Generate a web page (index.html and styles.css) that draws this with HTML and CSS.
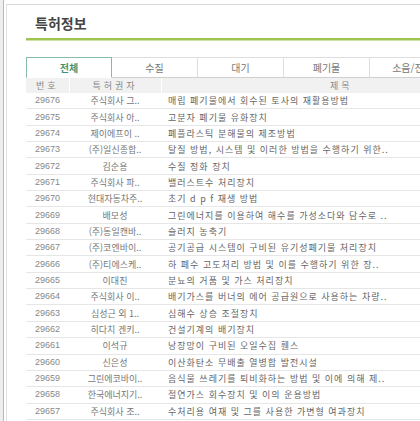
FILE: index.html
```html
<!DOCTYPE html>
<html lang="ko">
<head>
  <meta charset="UTF-8">
  <meta name="viewport" content="width=device-width, initial-scale=1.0">
  <title>특허정보</title>
  <link rel="stylesheet" href="styles.css">
</head>
<body>

<div class="frame">
  <div class="box">
    <h2 class="title">특허정보</h2>
    <div class="title-line"></div>

    <ul class="tabs">
      <li class="tab active">전체</li>
      <li class="tab">수질</li>
      <li class="tab">대기</li>
      <li class="tab">폐기물</li>
      <li class="tab">소음/진동</li>
      <li class="tab-rest"></li>
    </ul>

    <table class="patents">
      <colgroup>
        <col class="col-no">
        <col class="col-owner">
        <col class="col-title">
      </colgroup>
      <thead>
        <tr>
          <th>번호</th>
          <th>특허권자</th>
          <th>제목</th>
        </tr>
      </thead>
      <tbody>
        <tr><td class="no">29676</td><td class="owner">주식회사 그..</td><td class="subject">매립 폐기물에서 회수된 토사의 재활용방법</td></tr>
        <tr><td class="no">29675</td><td class="owner">주식회사 아..</td><td class="subject">고분자 폐기물 유화장치</td></tr>
        <tr><td class="no">29674</td><td class="owner">제이에프이 ..</td><td class="subject">폐플라스틱 분해물의 제조방법</td></tr>
        <tr><td class="no">29673</td><td class="owner">(주)일신종합..</td><td class="subject">탈질 방법, 시스템 및 이러한 방법을 수행하기 위한..</td></tr>
        <tr><td class="no">29672</td><td class="owner">김순용</td><td class="subject">수질 정화 장치</td></tr>
        <tr><td class="no">29671</td><td class="owner">주식회사 파..</td><td class="subject">밸러스트수 처리장치</td></tr>
        <tr><td class="no">29670</td><td class="owner">현대자동차주..</td><td class="subject">초기 d p f 재생 방법</td></tr>
        <tr><td class="no">29669</td><td class="owner">배모성</td><td class="subject">그린에너지를 이용하여 해수를 가성소다와 담수로 ..</td></tr>
        <tr><td class="no">29668</td><td class="owner">(주)동일캔바..</td><td class="subject">슬러지 농축기</td></tr>
        <tr><td class="no">29667</td><td class="owner">(주)코엔바이..</td><td class="subject">공기공급 시스템이 구비된 유기성폐기물 처리장치</td></tr>
        <tr><td class="no">29666</td><td class="owner">(주)티에스케..</td><td class="subject">하 폐수 고도처리 방법 및 이를 수행하기 위한 장..</td></tr>
        <tr><td class="no">29665</td><td class="owner">이대진</td><td class="subject">분뇨의 거품 및 가스 처리장치</td></tr>
        <tr><td class="no">29664</td><td class="owner">주식회사 이..</td><td class="subject">배기가스를 버너의 에어 공급원으로 사용하는 차량..</td></tr>
        <tr><td class="no">29663</td><td class="owner">심성근 외 1..</td><td class="subject">심해수 상승 조절장치</td></tr>
        <tr><td class="no">29662</td><td class="owner">히다치 겐키..</td><td class="subject">건설기계의 배기장치</td></tr>
        <tr><td class="no">29661</td><td class="owner">이석규</td><td class="subject">낭장망이 구비된 오일수집 휀스</td></tr>
        <tr><td class="no">29660</td><td class="owner">신은성</td><td class="subject">이산화탄소 무배출 열병합 발전시설</td></tr>
        <tr><td class="no">29659</td><td class="owner">그린에코바이..</td><td class="subject">음식물 쓰레기를 퇴비화하는 방법 및 이에 의해 제..</td></tr>
        <tr><td class="no">29658</td><td class="owner">한국에너지기..</td><td class="subject">절연가스 회수장치 및 이의 운용방법</td></tr>
        <tr><td class="no">29657</td><td class="owner">주식회사 조..</td><td class="subject">수처리용 여재 및 그를 사용한 가변형 여과장치</td></tr>
      </tbody>
    </table>
  </div>
</div>

</body>
</html>
```

FILE: styles.css
```css
html, body {
  overflow: hidden;
}
body {
  margin: 0;
  background-color: #eeeeee;
  font-family: "Noto Sans CJK KR", "Noto Sans", sans-serif;
  color: #666;
}
.frame {
  width: 560px;
  min-height: 421px;
  margin-left: 3px;
  padding: 4px 0 0 2px;
  border-left: 1px solid #b8b8b8;
  background: #fff;
}
.box {
  min-height: 416px;
  padding: 0 0 0 19px;
  border-top: 1px solid #d9d9d9;
  border-left: 1px solid #e2e2e2;
}
.title {
  margin: 0;
  padding: 10px 0 0 9px;
  height: 16px;
  font-size: 14px;
  line-height: 16px;
  font-weight: bold;
  color: #444;
}
.title-line {
  width: 495px;
  height: 0;
  margin-top: 7px;
  border-top: 2px solid #9fc452;
  border-bottom: 1px solid #cfe3a8;
}
.tabs {
  display: flex;
  width: 495px;
  margin: 16px 0 0;
  padding: 0;
  list-style: none;
}
.tab {
  box-sizing: border-box;
  width: 86px;
  height: 21px;
  border-top: 1px solid #dedede;
  border-right: 1px solid #dedede;
  border-bottom: 1px solid #cfcfcf;
  font-size: 10px;
  line-height: 19px;
  text-align: center;
  color: #777;
}
.tab.active {
  border: 1px solid #87bca4;
  border-bottom-color: #fff;
  color: #3f9470;
  font-weight: bold;
}
.tab-rest {
  flex: 1;
  border-bottom: 1px solid #cfcfcf;
}
.patents {
  width: 495px;
  border-collapse: collapse;
  table-layout: fixed;
}
.col-no {
  width: 43px;
}
.col-owner {
  width: 92px;
}
.patents th {
  height: 15px;
  padding: 0;
  background: #f1f1f1;
  border-left: 1px solid #fff;
  font-size: 9px;
  font-weight: normal;
  line-height: 15px;
  letter-spacing: 3px;
  color: #888;
}
.patents th:first-child {
  border-left: none;
}
.patents td {
  height: 15.35px;
  padding: 0;
  border-bottom: 1px solid #e6e6e6;
  font-size: 9px;
  line-height: 15px;
  white-space: nowrap;
  overflow: hidden;
}
.patents .no {
  text-align: center;
  font-family: "Liberation Sans", Arial, sans-serif;
  color: #888;
}
.patents .owner {
  text-align: center;
  color: #777;
}
.patents .subject {
  padding-left: 7px;
  letter-spacing: 1px;
  color: #666;
}
```
